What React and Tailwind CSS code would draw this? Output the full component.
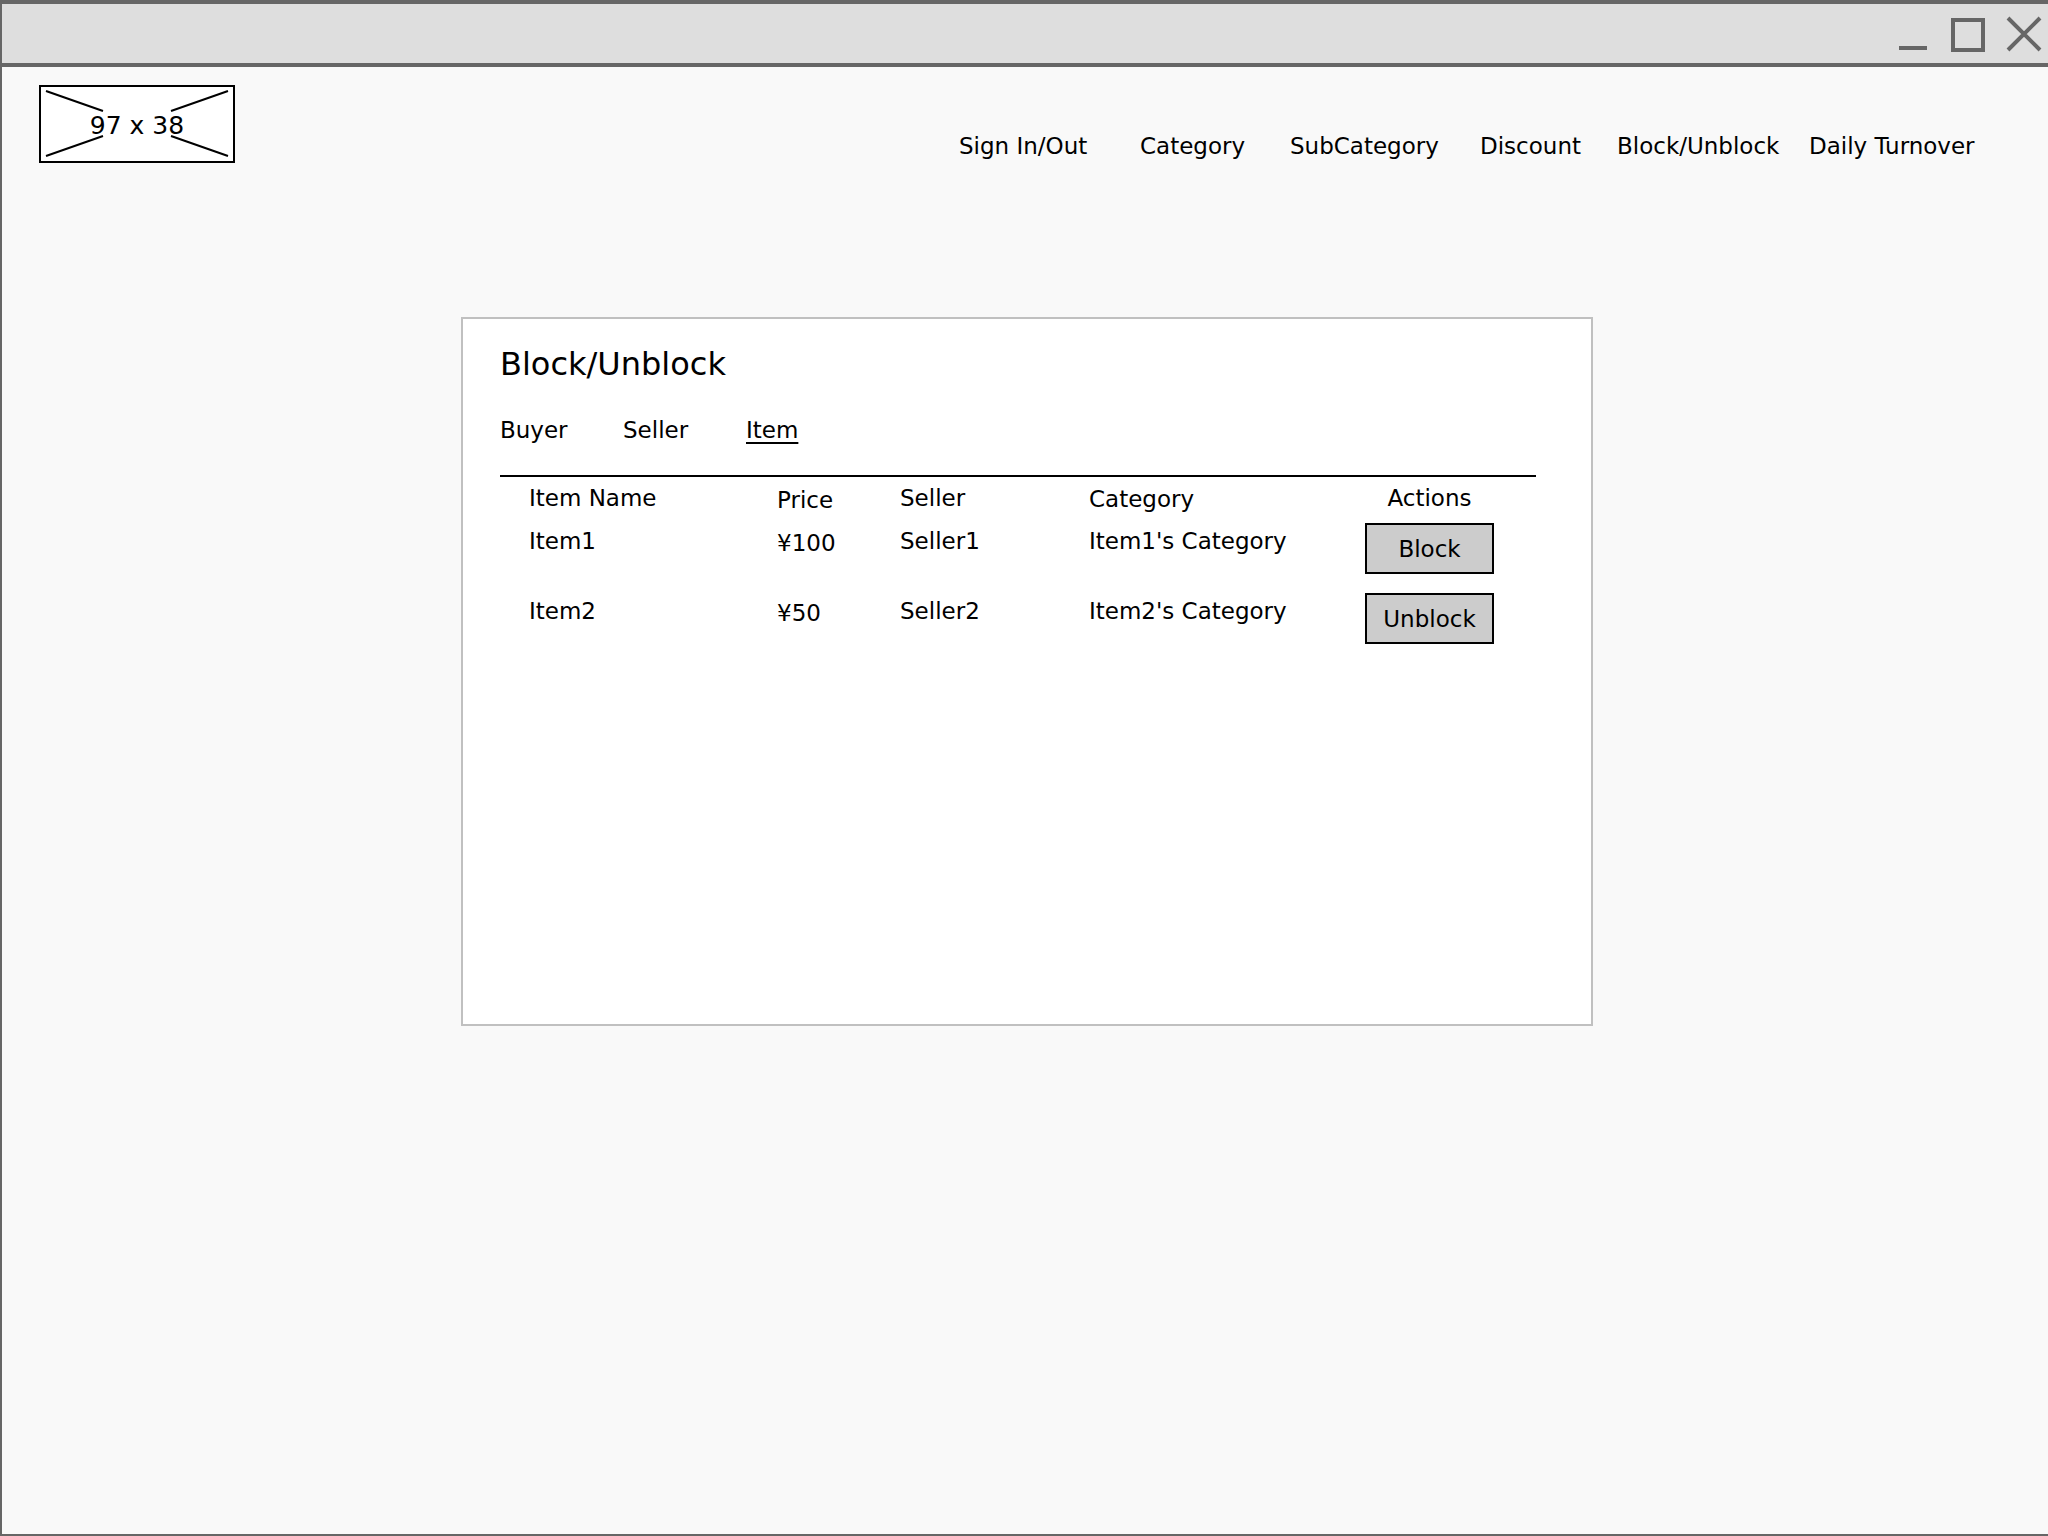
const font = { fontFamily: '"Comic Sans MS", "DejaVu Sans", sans-serif' };

const navItems = [
  { label: "Sign In/Out", w: "w-[181px]" },
  { label: "Category", w: "w-[150px]" },
  { label: "SubCategory", w: "w-[190px]" },
  { label: "Discount", w: "w-[137px]" },
  { label: "Block/Unblock", w: "w-[192px]" },
  { label: "Daily Turnover", w: "w-[200px]" },
];

const rows = [
  { name: "Item1", price: "¥100", seller: "Seller1", category: "Item1's Category", action: "Block" },
  { name: "Item2", price: "¥50", seller: "Seller2", category: "Item2's Category", action: "Unblock" },
];

const cols = "grid grid-cols-[248px_123px_189px_276px_129px] pl-[29px]";

function WindowControls() {
  return (
    <svg width="160" height="60" viewBox="0 0 160 60" className="shrink-0">
      <rect x="11" y="42" width="28" height="4" fill="#666" />
      <rect x="65" y="16" width="30" height="30" fill="none" stroke="#666" strokeWidth="4" />
      <path d="M120 14 L152 46 M152 14 L120 46" stroke="#666" strokeWidth="4" />
    </svg>
  );
}

function LogoPlaceholder() {
  return (
    <div className="relative w-[196px] h-[78px] shrink-0 border-2 border-black bg-white flex items-center justify-center">
      <svg className="absolute inset-0" width="192" height="74" viewBox="0 0 192 74">
        <path d="M5 4 L62 24 M130 24 L187 4 M5 69 L62 49 M130 49 L187 69" stroke="#000" strokeWidth="2" />
      </svg>
      <span className="relative mt-[3px] text-[25px] leading-none text-black">97 x 38</span>
    </div>
  );
}

export default function App() {
  return (
    <div style={font} className="w-[2048px] h-[1536px] bg-[#f9f9f9] border-l-2 border-b-2 border-[#666] flex flex-col text-black overflow-hidden">
      <div className="h-[67px] shrink-0 bg-[#dedede] border-t-4 border-b-4 border-[#666] flex justify-end items-start">
        <WindowControls />
      </div>

      <header className="h-[96px] flex items-start pl-[37px] pt-[18px]">
        <LogoPlaceholder />
        <nav className="flex ml-[724px] mt-[46px] text-[23px] leading-[30px] whitespace-nowrap">
          {navItems.map((n) => (
            <div key={n.label} className={`${n.w} shrink-0`}>{n.label}</div>
          ))}
        </nav>
      </header>

      <main className="pl-[459px] pt-[154px]">
        <section className="w-[1132px] h-[709px] bg-white border-2 border-[#c0c0c0] pl-[37px] pr-[55px] pt-[25px]">
          <h1 className="text-[32px] leading-[40px]">Block/Unblock</h1>
          <div className="flex mt-[31px] text-[23px] leading-[30px]">
            <span className="w-[123px]">Buyer</span>
            <span className="w-[123px]">Seller</span>
            <span className="underline underline-offset-4">Item</span>
          </div>
          <div className="mt-[30px] border-t-2 border-black" />
          <div className={`${cols} mt-[6px] text-[23px] leading-[30px]`}>
            <span>Item Name</span>
            <span className="mt-[2px]">Price</span>
            <span>Seller</span>
            <span className="mt-[1px]">Category</span>
            <span className="text-center">Actions</span>
          </div>
          <div className="flex flex-col gap-[22px] mt-[11px]">
            {rows.map((r) => (
              <div key={r.name} className={`${cols} items-start text-[23px] leading-[30px]`}>
                <span>{r.name}</span>
                <span className="mt-[2px]">{r.price}</span>
                <span>{r.seller}</span>
                <span>{r.category}</span>
                <button className="-mt-[3px] h-[51px] w-[129px] bg-[#cccccc] border-2 border-black text-[23px]">
                  {r.action}
                </button>
              </div>
            ))}
          </div>
        </section>
      </main>
    </div>
  );
}
